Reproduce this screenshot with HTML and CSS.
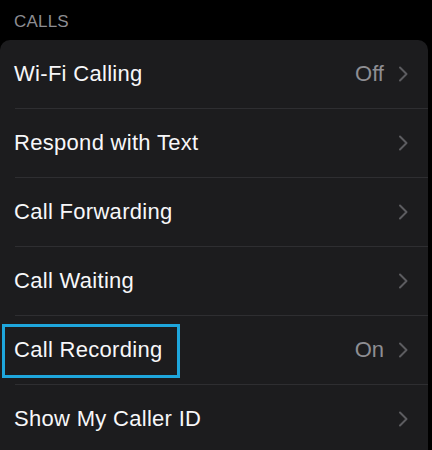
FILE: index.html
```html
<!DOCTYPE html>
<html lang="en">
<head>
<meta charset="utf-8">
<title>Calls</title>
<link rel="stylesheet" href="styles.css">
</head>
<body>
<div class="screen">
  <div class="section-header">CALLS</div>
  <div class="card">
    <div class="row">
      <span class="label">Wi-Fi Calling</span>
      <span class="value">Off</span>
      <svg class="chev" viewBox="0 0 10 16" width="10" height="16"><path d="M2 1.5 L8.5 8 L2 14.5" /></svg>
    </div>
    <div class="row">
      <span class="label">Respond with Text</span>
      <svg class="chev" viewBox="0 0 10 16" width="10" height="16"><path d="M2 1.5 L8.5 8 L2 14.5" /></svg>
    </div>
    <div class="row">
      <span class="label">Call Forwarding</span>
      <svg class="chev" viewBox="0 0 10 16" width="10" height="16"><path d="M2 1.5 L8.5 8 L2 14.5" /></svg>
    </div>
    <div class="row">
      <span class="label">Call Waiting</span>
      <svg class="chev" viewBox="0 0 10 16" width="10" height="16"><path d="M2 1.5 L8.5 8 L2 14.5" /></svg>
    </div>
    <div class="row row-highlight">
      <span class="label">Call Recording</span>
      <span class="value">On</span>
      <svg class="chev" viewBox="0 0 10 16" width="10" height="16"><path d="M2 1.5 L8.5 8 L2 14.5" /></svg>
      <span class="highlight-box"></span>
    </div>
    <div class="row">
      <span class="label">Show My Caller ID</span>
      <svg class="chev" viewBox="0 0 10 16" width="10" height="16"><path d="M2 1.5 L8.5 8 L2 14.5" /></svg>
    </div>
  </div>
</div>
</body>
</html>
```

FILE: styles.css
```css
html, body {
  margin: 0;
  padding: 0;
  background: #000;
  height: 100%;
  overflow: hidden;
}

body {
  font-family: "Liberation Sans", Arial, sans-serif;
  color: #fff;
}

.screen {
  padding-right: 4px;
}

.section-header {
  padding: 12px 0 0 14px;
  height: 28px;
  font-size: 17px;
  line-height: 20px;
  color: #8d8d92;
  letter-spacing: 0.2px;
}

.card {
  background: #1c1c1e;
  border-radius: 10px 10px 0 0;
}

.row {
  position: relative;
  display: flex;
  align-items: center;
  height: 68px;
  padding: 0 20px 0 14px;
}

.row + .row::before {
  content: "";
  position: absolute;
  left: 15px;
  right: 0;
  top: -1px;
  height: 1px;
  background: #2e2e31;
}

.row + .row {
  margin-top: 1px;
}

.label {
  flex: 1;
  font-size: 22px;
  line-height: 26px;
  letter-spacing: 0.3px;
  color: #f7f7f9;
}

.value {
  font-size: 22px;
  line-height: 26px;
  color: #8e8e93;
  margin-right: 14px;
}

.chev {
  display: block;
  fill: none;
  stroke: #5c5c60;
  stroke-width: 2;
  stroke-linecap: round;
  stroke-linejoin: round;
}

.highlight-box {
  position: absolute;
  left: 2px;
  top: 8px;
  width: 178px;
  height: 54px;
  box-sizing: border-box;
  border: 3px solid #1ea6dc;
}
```
